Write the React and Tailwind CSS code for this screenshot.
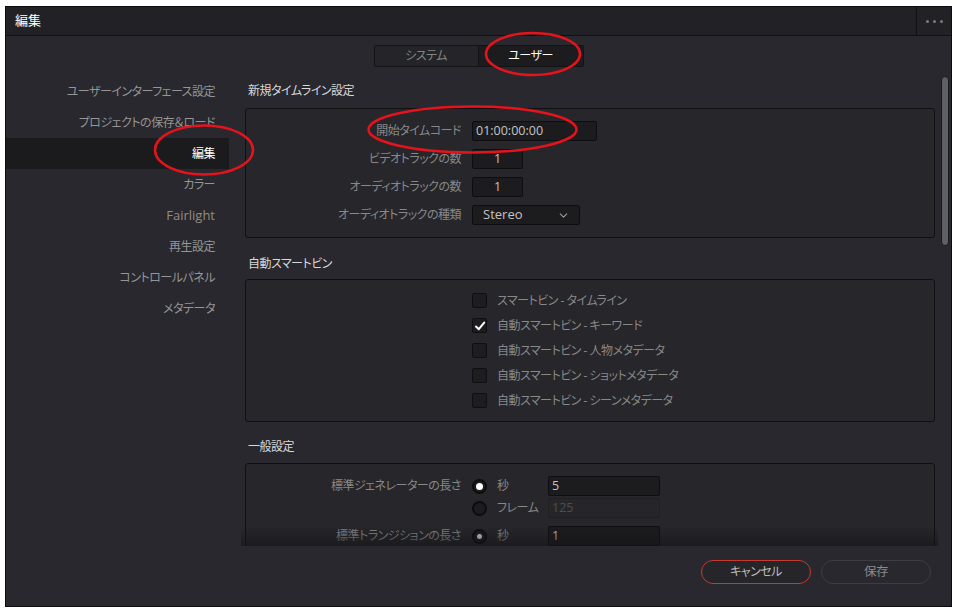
import { ChevronDown } from "lucide-react"

const navItems = [
  "ユーザーインターフェース設定",
  "プロジェクトの保存＆ロード",
  "編集",
  "カラー",
  "Fairlight",
  "再生設定",
  "コントロールパネル",
  "メタデータ",
]

const smartBins = [
  { label: "スマートビン - タイムライン", checked: false },
  { label: "自動スマートビン - キーワード", checked: true },
  { label: "自動スマートビン - 人物メタデータ", checked: false },
  { label: "自動スマートビン - ショットメタデータ", checked: false },
  { label: "自動スマートビン - シーンメタデータ", checked: false },
]

const Field = ({ value, className = "", dim = false }) => (
  <div
    className={`h-[20px] flex items-center rounded-[2px] border text-[12.5px] tracking-normal ${
      dim ? "border-[#202023] bg-[#262629] text-[#4e4e52]" : "border-[#0e0e10] bg-[#1c1c1f] text-[#c4c4c4]"
    } ${className}`}
  >
    {value}
  </div>
)

const Radio = ({ on, small }) => (
  <div className="w-[15px] h-[15px] rounded-full border-2 border-[#0d0d0f] bg-[#1c1c1f] flex items-center justify-center">
    {on && <div className={`${small ? "w-[5px] h-[5px] bg-[#d8d8d8]" : "w-[7px] h-[7px] bg-white"} rounded-full`} />}
  </div>
)

const Checkbox = ({ checked }) => (
  <div className="w-[15px] h-[15px] rounded-[2px] border border-[#0f0f11] bg-[#1d1d20] flex items-center justify-center">
    {checked && (
      <svg width="12" height="12" viewBox="0 0 12 12">
        <path d="M2 6.5 L4.8 9.2 L10.2 2.6" fill="none" stroke="#fff" strokeWidth="2" strokeLinecap="round" strokeLinejoin="round" />
      </svg>
    )}
  </div>
)

const Row = ({ label, children, h = "h-[28px]" }) => (
  <div className={`${h} flex items-center`}>
    <div className="w-[216px] pr-[1px] text-right text-[12px] text-[#888888]">{label}</div>
    <div className="ml-[10px] flex items-center">{children}</div>
  </div>
)

const App = () => {
  return (
    <div className="relative w-[957px] h-[612px] bg-white pt-[6px] pl-[5px] font-['Open_Sans','Noto_Sans_CJK_JP',sans-serif] [font-feature-settings:'palt'] tracking-[-0.5px]">
      <div className="w-[947px] h-[601px] border border-[#0c0c0d] bg-[#28282e] flex flex-col">
        {/* title bar */}
        <div className="h-[29px] shrink-0 flex bg-[#222226] border-b border-[#111113]">
          <div className="flex-1 flex items-center pl-[9px] text-[13px] text-white tracking-normal">編集</div>
          <div className="w-[35px] border-l border-[#111113] flex items-center justify-center gap-[4px]">
            <span className="w-[3px] h-[3px] rounded-full bg-[#7c7c80]" />
            <span className="w-[3px] h-[3px] rounded-full bg-[#7c7c80]" />
            <span className="w-[3px] h-[3px] rounded-full bg-[#7c7c80]" />
          </div>
        </div>

        {/* tabs */}
        <div className="h-[40px] shrink-0 pt-[9px] flex justify-center">
          <div className="h-[22px] flex rounded-[2px] border border-[#131315] overflow-hidden text-[12px]">
            <div className="w-[104px] flex items-center justify-center bg-[#252529] text-[#858585] border-r border-[#131315]">システム</div>
            <div className="w-[104px] flex items-center justify-center bg-[#1c1c1f] text-white">ユーザー</div>
          </div>
        </div>

        {/* body */}
        <div className="h-[470px] shrink-0 flex">
          <div className="w-[223px] shrink-0 flex flex-col">
            {navItems.map((item) => (
              <div
                key={item}
                className={`h-[31px] shrink-0 flex items-center justify-end pr-[14px] ${
                  item === "編集"
                    ? "bg-[#1b1b1e] text-white text-[12px]"
                    : item === "Fairlight"
                    ? "text-[#958b82] text-[13px] tracking-normal"
                    : "text-[#959595] text-[12px]"
                }`}
              >
                {item}
              </div>
            ))}
          </div>

          <div className="relative ml-[12px] w-[697px] h-full overflow-hidden pl-[4px] pr-[3px]">
            <div className="h-[32px] pt-[7px] pl-[3px] text-[12px] leading-[16px] text-[#d8d8d8]">新規タイムライン設定</div>
            <div className="rounded-[3px] border border-[#101012] bg-[#26262b] pt-[8px] pb-[8px]">
              <Row label="開始タイムコード">
                <Field value="01:00:00:00" className="w-[125px] pl-[3px]" />
              </Row>
              <Row label="ビデオトラックの数">
                <Field value="1" className="w-[51px] justify-center" />
              </Row>
              <Row label="オーディオトラックの数">
                <Field value="1" className="w-[51px] justify-center" />
              </Row>
              <Row label="オーディオトラックの種類">
                <div className="w-[108px] h-[20px] flex items-center justify-between pl-[10px] pr-[9px] rounded-[2px] border border-[#0e0e10] bg-[#1c1c1f] text-[13px] tracking-normal text-[#c4c4c4]">
                  Stereo
                  <ChevronDown size={13} strokeWidth={2} className="text-[#9a9a9a]" />
                </div>
              </Row>
            </div>

            <div className="h-[41px] pt-[18px] pl-[3px] text-[12px] leading-[16px] text-[#d8d8d8]">自動スマートビン</div>
            <div className="rounded-[3px] border border-[#101012] bg-[#26262b] pt-[8px] pb-[8px]">
              {smartBins.map((b) => (
                <div key={b.label} className="h-[25px] flex items-center pl-[226px]">
                  <Checkbox checked={b.checked} />
                  <span className="ml-[10px] text-[12px] text-[#888888]">{b.label}</span>
                </div>
              ))}
            </div>

            <div className="h-[41px] pt-[17px] pl-[3px] text-[12px] leading-[16px] text-[#d8d8d8]">一般設定</div>
            <div className="h-[120px] rounded-[3px] border border-[#101012] bg-[#26262b] pt-[11px]">
              <Row label="標準ジェネレーターの長さ" h="h-[22px]">
                <Radio on />
                <span className="ml-[10px] w-[51px] text-[12px] text-[#888888]">秒</span>
                <Field value="5" className="w-[112px] pl-[3px]" />
              </Row>
              <Row label="" h="h-[22px]">
                <Radio />
                <span className="ml-[10px] w-[51px] text-[12px] text-[#888888]">フレーム</span>
                <Field value="125" dim className="w-[112px] pl-[3px]" />
              </Row>
              <div className="h-[6px]" />
              <Row label="標準トランジションの長さ" h="h-[22px]">
                <Radio on small />
                <span className="ml-[10px] w-[51px] text-[12px] text-[#888888]">秒</span>
                <Field value="1" className="w-[112px] pl-[3px]" />
              </Row>
            </div>

            <div className="absolute left-0 right-0 bottom-0 h-[20px] bg-linear-to-b from-transparent to-[#141416]/60" />
          </div>

          <div className="ml-[3px] w-[8px] h-[170px] rounded-full border border-[#1a1a1c] bg-[#5c5f64]" />
        </div>

        {/* footer */}
        <div className="flex-1 flex justify-end items-start pt-[14px] pr-[20px] gap-[10px]">
          <button className="w-[110px] h-[24px] rounded-full border border-[#c8392f] text-[12px] text-[#bdbdbd] bg-[#26262a]">キャンセル</button>
          <button className="w-[110px] h-[24px] rounded-full border border-[#3d3d42] text-[12.5px] text-[#8a8a8a] bg-[#28282e]">保存</button>
        </div>
      </div>

      {/* red annotation ellipses */}
      <svg className="absolute inset-0 pointer-events-none" width="957" height="612">
        <ellipse cx="533" cy="54" rx="47" ry="21" fill="none" stroke="#e5141c" strokeWidth="2.5" />
        <ellipse cx="204" cy="150" rx="49" ry="24.5" fill="none" stroke="#e5141c" strokeWidth="2.5" />
        <ellipse cx="472.5" cy="129.5" rx="104" ry="23" fill="none" stroke="#e5141c" strokeWidth="2.5" />
      </svg>
    </div>
  )
}

export default App
